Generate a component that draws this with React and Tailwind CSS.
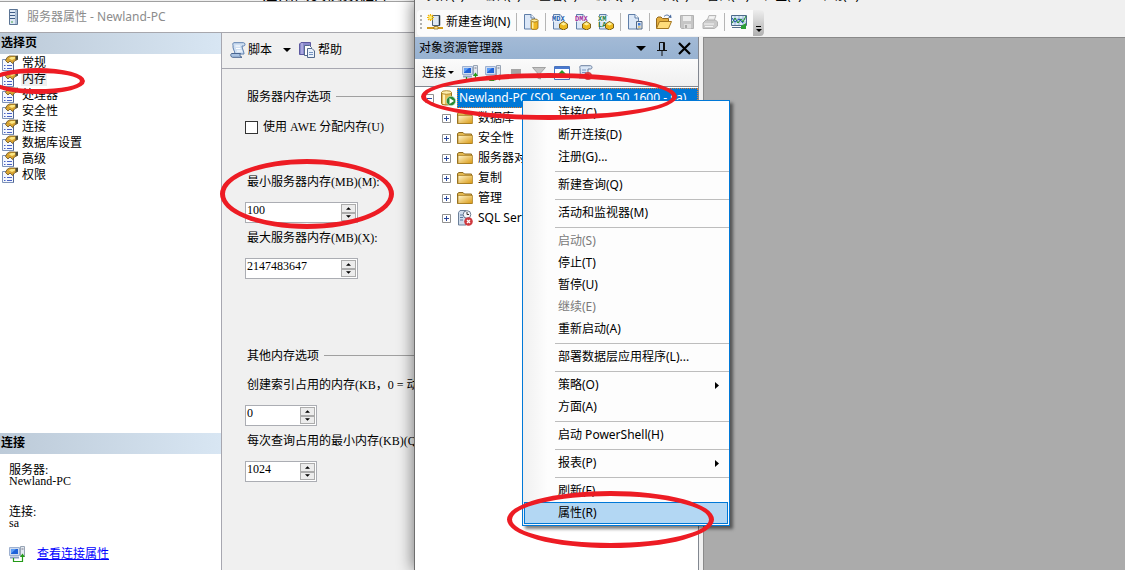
const pages = ['常规', '内存', '处理器', '安全性', '连接', '数据库设置', '高级', '权限'];

const menuBar = ['文件(F)', '编辑(E)', '查看(V)', '调试(D)', '工具(T)', '窗口(W)', '社区(C)', '帮助(H)'];

const folders = ['数据库', '安全性', '服务器对象', '复制', '管理'];

const contextMenu = [
  [{ label: '连接(C)...' }, { label: '断开连接(D)' }, { label: '注册(G)...' }],
  [{ label: '新建查询(Q)' }],
  [{ label: '活动和监视器(M)' }],
  [
    { label: '启动(S)', disabled: true },
    { label: '停止(T)' },
    { label: '暂停(U)' },
    { label: '继续(E)', disabled: true },
    { label: '重新启动(A)' },
  ],
  [{ label: '部署数据层应用程序(L)...' }],
  [{ label: '策略(O)', submenu: true }, { label: '方面(A)' }],
  [{ label: '启动 PowerShell(H)' }],
  [{ label: '报表(P)', submenu: true }],
  [{ label: '刷新(F)' }, { label: '属性(R)', active: true }],
];

function Icon({ children, className = '' }) {
  return (
    <svg viewBox="0 0 16 16" className={`size-4 shrink-0 ${className}`} aria-hidden="true">
      {children}
    </svg>
  );
}

function ServerIcon() {
  return (
    <Icon>
      <path d="M4.5.5h8v15h-8z" fill="#dfe9f5" stroke="#5b7494" />
      <path d="M11 1v14" stroke="#a9bdd4" strokeWidth="2" />
      <path d="M5 3.500h5M5 6.500h5M5 9.500h5" stroke="#3d5c86" />
      <path d="M6 13h2" stroke="#46a546" />
    </Icon>
  );
}

function PageIcon() {
  return (
    <Icon>
      <path d="M.5 4.500h11v11H.5z" fill="#f4f7fd" stroke="#7d92b8" />
      <path d="M11.500 5v10.500" stroke="#4f6490" />
      <path d="M2 10.500h1.500M2 13.500h1.500M5 10.500h5M5 13.500h5" stroke="#4a62c4" />
      <path d="m3.500 5.500 1.500-3L7.500 1h5l3 .5v3L12.500 6l-2 2.500L8 6 6 8z" fill="#d9a431" stroke="#6a5220" strokeWidth=".8" />
      <path d="m7 3.500 2-1.500h4v1.500L10 5z" fill="#fbe683" />
      <path d="m13.500 1 2.500-.5v4L13.500 5z" fill="#4a4a3a" />
    </Icon>
  );
}

function ScriptIcon() {
  return (
    <Icon>
      <path d="M4 .7h9.500c2 .2 2 3.300 0 3.300H12c0 3 2 5 2 8H5C5 9 2.500 7 3 3.500 2.500 2 3 .7 4 .7z" fill="#cfdff2" stroke="#5d7fae" />
      <path d="M1.500 11.500h9c-1 1-.5 3.500 1.500 3.800H2.500c-2-.3-2.200-3-1-3.800z" fill="#a9c2e2" stroke="#49658f" />
      <path d="M5.500 4h4.500M6 6.500h4.500M7 9h5" stroke="#fff" />
    </Icon>
  );
}

function HelpIcon() {
  return (
    <Icon>
      <path d="M.5 2 2 .5h9.500v12H.5z" fill="#8a88cc" stroke="#5c59a0" />
      <path d="M3 1v11" stroke="#c9c8ef" />
      <path d="M5.500 3.500h5l2 2v8h-7z" fill="#fff" stroke="#53698c" />
      <path d="M8.500 6.500h4.500l2.500 2.500v6.500h-7z" fill="#eaf2fb" stroke="#53698c" />
      <path d="M10 10.500h4M10 12.500h4" stroke="#7694c0" />
    </Icon>
  );
}

function Computers() {
  return (
    <>
      <path d="M.5 1.500h10v8H.5z" fill="#cfdcf0" stroke="#9db0d0" />
      <path d="M2 3h7v5H2z" fill="#1f62d8" />
      <path d="M2 3h5L2 7.500z" fill="#5b9cf5" />
      <path d="M1 11.500h9" stroke="#8da2c4" strokeWidth="2" />
      <path d="M11.500.5h4v10h-4z" fill="#e2e8f0" stroke="#98a4b4" />
      <path d="M12.500 3h2" stroke="#778" />
    </>
  );
}

function ConnectIcon() {
  return (
    <Icon>
      <Computers />
      <path d="M4.500 12v3.500h9V9" fill="none" stroke="#249a18" strokeWidth="1.200" />
      <path d="m11 11 2.500-3.500L16 11z" fill="#249a18" />
    </Icon>
  );
}

function DisconnectIcon() {
  return (
    <Icon>
      <Computers />
      <path d="M4.500 13v2.500h5" fill="none" stroke="#249a18" />
      <path d="m10 10 5 5m0-5-5 5" stroke="#d8262c" strokeWidth="1.500" />
    </Icon>
  );
}

function Sheet() {
  return (
    <>
      <path d="M1.500.5H8L11.500 4v11h-10z" fill="#dbe7f7" stroke="#5f7ea8" />
      <path d="M8 .5V4h3.500" fill="#fff" stroke="#5f7ea8" />
    </>
  );
}

function Cylinder() {
  return (
    <>
      <path d="M8 6.500v7.500c0 2 7 2 7 0V6.500z" fill="#f0b823" stroke="#94690c" strokeWidth=".8" />
      <path d="M9 8v6.500h1.500V8z" fill="#fff0a0" />
      <ellipse cx="11.500" cy="6.500" rx="3.500" ry="1.500" fill="#fff0a0" stroke="#94690c" strokeWidth=".8" />
    </>
  );
}

function NewQueryIcon() {
  return (
    <Icon>
      <path d="M5.500 1.500h7v10h-7z" fill="#dfe9f4" stroke="#4f6175" />
      <path d="M12.500 1.500v10" stroke="#283848" strokeWidth="1.500" />
      <path d="M0 14h16M8.500 12v2" stroke="#d39a19" strokeWidth="2" />
      <path d="M7 12.500h4V15H7z" fill="#ffe58a" stroke="#8a6518" strokeWidth=".7" />
      <path d="M3.500 0v7M0 3.500h7M1 1l5 5M6 1 1 6" stroke="#f3b300" strokeWidth="1.200" />
      <circle cx="3.500" cy="3.500" r="1.700" fill="#fff06a" />
    </Icon>
  );
}

function EngineQueryIcon() {
  return <Icon><Sheet /><Cylinder /></Icon>;
}

function CubeQueryIcon({ first, second, color }) {
  return (
    <Icon>
      <Sheet />
      <path d="M0 2h12v5.500H0z" fill="#f3f6fb" />
      <text x="0" y="7" fontSize="7" fontWeight="700" fill={color} fontFamily="Liberation Mono, monospace">{first}</text>
      {second && <text x="0" y="13" fontSize="7" fontWeight="700" fill={color} fontFamily="Liberation Mono, monospace">{second}</text>}
      <path d="M7.500 10 11.500 7.500 15.500 10v4l-4 2-4-2z" fill="#edb91e" stroke="#73560d" strokeWidth=".9" />
      <path d="m8.500 10 3-1.700L14.500 10l-3 1.500z" fill="#fff19b" />
    </Icon>
  );
}

function CompactQueryIcon() {
  return (
    <Icon>
      <Sheet />
      <path d="M9.500 7.500h5.500v7.500H9.500z" fill="#dfe6f0" stroke="#526885" />
      <path d="M11 9h2.500v2.500H11z" fill="#3b79d2" />
      <path d="M11 13h2.500" stroke="#d3a11f" />
    </Icon>
  );
}

function OpenIcon() {
  return (
    <Icon>
      <path d="M.5 14V4.500L2 3h3l1.500 1.500h6V14z" fill="#e4ae3e" stroke="#94681d" />
      <path d="m.5 14.500 3-7h12l-3 7z" fill="#ffdc7b" stroke="#a4761f" />
      <path d="M8 2.500C10 .5 12.500.5 14 3" fill="none" stroke="#496a9e" />
      <path d="m12 3.500 3.500.5-.5-3.500z" fill="#496a9e" />
    </Icon>
  );
}

function SaveIcon() {
  return (
    <Icon>
      <path d="M1.500 1.500h13v13h-12l-1-1z" fill="#c6c6c6" stroke="#b2b2b2" />
      <path d="M4 2h8v5H4z" fill="#ededed" />
      <path d="M5 10h7v4.500H5z" fill="#dedede" />
      <path d="M6 11h2v3H6z" fill="#a8a8a8" />
    </Icon>
  );
}

function PrintIcon() {
  return (
    <Icon>
      <path d="M5 7 7 1.500h7L12 7z" fill="#ececec" stroke="#b8b8b8" />
      <path d="m1 9 3-3h9.500L15.500 8v4l-3 2.500H1z" fill="#cacaca" stroke="#b2b2b2" />
      <path d="M2 10h10M3 12.500h8M7.500 3.500h4" stroke="#f5f5f5" />
    </Icon>
  );
}

function ActivityIcon() {
  return (
    <Icon>
      <path d="M.5 1.500h15v10H.5z" fill="#dcecf8" stroke="#4d6a8a" />
      <path d="M4 2v9M8 2v9M12 2v9M1 5h14M1 8h14" stroke="#6f93b5" strokeWidth=".6" />
      <path d="m1 9 3-5 3 5 3-4 2 3 3-6" fill="none" stroke="#1d8d2a" />
      <path d="m1 4 3 4 4-3 4 4" fill="none" stroke="#2452b8" />
      <path d="M1 13.500h10" stroke="#536d8a" />
      <path d="m10 12 5-3v6h-5z" fill="#2c9e35" />
    </Icon>
  );
}

function StopIcon() {
  return <Icon><path d="M3 4h10v9H3z" fill="#a5a5a5" /></Icon>;
}

function FilterIcon() {
  return (
    <Icon>
      <path d="M1.500 2.500h13L9.500 8v6l-3-1V8z" fill="#c3c3c3" stroke="#a2a2a2" />
    </Icon>
  );
}

function RefreshIcon() {
  return (
    <Icon>
      <path d="M.5 1.500h15v13H.5z" fill="#fff" stroke="#4a74bd" />
      <path d="M1 3h14" stroke="#4a79d0" strokeWidth="2" />
      <path d="m8 5 4 4H9.500v3.500h-3V9H4z" fill="#2a9a2a" />
    </Icon>
  );
}

function ScriptErrorIcon() {
  return (
    <Icon>
      <path d="M4 .7h9.500c2 .2 2 3.300 0 3.300H11v9H2c2-2 1-6 1-9.500C2.500 2 3 .7 4 .7z" fill="#dbe7f6" stroke="#6a7f9f" />
      <path d="M5 5h4M5 7.500h4" stroke="#7795c3" />
      <circle cx="11" cy="11" r="4" fill="#d04a4a" />
      <path d="m9.500 9.500 3 3m0-3-3 3" stroke="#fff" />
    </Icon>
  );
}

function DatabaseServerIcon() {
  return (
    <Icon>
      <path d="M1.500 2.500v11c0 2 10 2 10 0v-11z" fill="#e6bd55" stroke="#98711e" />
      <path d="M3 4v10h2V4z" fill="#fff1b8" />
      <ellipse cx="6.500" cy="2.500" rx="5" ry="1.800" fill="#fff0af" stroke="#b48b2c" />
      <circle cx="11" cy="11" r="4.700" fill="#278a35" stroke="#d9eedb" strokeWidth=".6" />
      <path d="M9.500 8v6l4.500-3z" fill="#fff" />
    </Icon>
  );
}

function FolderIcon() {
  return (
    <Icon>
      <defs>
        <linearGradient id="folder" x1="0" y1="0" x2="1" y2="1">
          <stop offset="0" stopColor="#fff6cf" />
          <stop offset="1" stopColor="#d9980f" />
        </linearGradient>
      </defs>
      <path d="M.5 13.500v-10L2 2.500h4l1.500 1.500h7v9.500z" fill="#e2b74f" stroke="#8f6a1e" />
      <path d="M1 5.500h14.500v8H1z" fill="url(#folder)" stroke="#a67c22" strokeWidth=".7" />
    </Icon>
  );
}

function AgentIcon() {
  return (
    <Icon>
      <path d="M1.500 2.500 3 .5h6v14.500H1.500z" fill="#cfdcec" stroke="#6b7f99" />
      <path d="M3 5h3M3 7.500h3M3 10h3" stroke="#5a789e" />
      <circle cx="10" cy="4.500" r="3.800" fill="#f4f6fa" stroke="#6b7a90" />
      <path d="M10 2v2.500h2" fill="none" stroke="#333" />
      <circle cx="11.500" cy="11.500" r="4.300" fill="#cf3a3f" />
      <path d="m10 10 3 3m0-3-3 3" stroke="#fff" strokeWidth="1.300" />
    </Icon>
  );
}

function Expander({ open }) {
  return (
    <svg viewBox="0 0 9 9" className="size-[9px] shrink-0" aria-hidden="true">
      <path d="M.5.5h8v8h-8z" fill="#fff" stroke="#919191" />
      <path d={open ? 'M2 4.500h5' : 'M2 4.500h5M4.500 2v5'} stroke="#2b4a9b" />
    </svg>
  );
}

function DownArrow({ className }) {
  return (
    <svg viewBox="0 0 8 4" className={className} aria-hidden="true">
      <path d="M0 0h8L4 4z" fill="currentColor" />
    </svg>
  );
}

function ToolButton({ label, children }) {
  return <button type="button" aria-label={label} className="shrink-0">{children}</button>;
}

function ToolSeparator() {
  return <span className="mx-1.5 h-[18px] w-px shrink-0 bg-[#b5b5b5]" />;
}

function NumberField({ id, label, value, small }) {
  return (
    <div className="flex flex-col items-start gap-[13px]">
      <label htmlFor={id} className="h-4 pl-0.5 leading-[18px] whitespace-nowrap">{label}</label>
      <div className={`flex h-[21px] border border-[#abadb3] bg-white p-px ${small ? 'w-[72px]' : 'w-[113px]'}`}>
        <input id={id} defaultValue={value} className="h-3 min-w-0 flex-1 leading-3 outline-none" />
        <span className="flex w-[15px] flex-col bg-[#f0f0f0]">
          <button type="button" aria-label="增加" className="flex flex-1 items-center justify-center border border-[#acacac] bg-[#ececec]">
            <DownArrow className="h-[3px] w-[5px] rotate-180" />
          </button>
          <button type="button" aria-label="减少" className="flex flex-1 items-center justify-center border border-[#acacac] bg-[#ececec]">
            <DownArrow className="h-[3px] w-[5px]" />
          </button>
        </span>
      </div>
    </div>
  );
}

function GroupTitle({ children }) {
  return (
    <h3 className="flex h-4 items-center gap-[5px] pl-0.5 leading-[18px]">
      <span className="h-4 shrink-0">{children}</span>
      <span className="h-px flex-1 bg-[#a0a0a0]" />
    </h3>
  );
}

function SectionHeader({ children }) {
  return (
    <h2 className="h-[21px] bg-linear-to-r from-[#bccad8] to-[#d8e6f3] pl-px text-xs leading-5 font-bold">{children}</h2>
  );
}

function PropertiesDialog() {
  return (
    <section className="flex w-[414px] shrink-0 flex-col overflow-hidden bg-[#f0f0f0] font-['Liberation_Serif','Noto_Sans_CJK_SC',serif] text-xs">
      <div className="flex h-0.5 items-end gap-8 overflow-hidden border-b border-[#a0a0a0] bg-[#f0f0f0] pl-[225px] text-base leading-3 whitespace-nowrap">
        <span>•</span>
        <span>启用的实例数据库</span>
      </div>
      <header className="flex h-[31px] items-center gap-1.5 border-b border-[#a7a7ad] bg-white pl-[5px] font-['Noto_Sans','Noto_Sans_CJK_SC',sans-serif] text-[#8c8c8c]">
        <ServerIcon />
        <h1>服务器属性 - Newland-PC</h1>
      </header>
      <div className="flex flex-1">
        <aside className="flex w-[222px] shrink-0 flex-col border-r border-[#a7a7b0] bg-white">
          <SectionHeader>选择页</SectionHeader>
          <ul className="flex-1 pt-px">
            {pages.map((page) => (
              <li key={page} className="flex h-4 items-center gap-[3px] pl-0.5">
                <PageIcon />
                <span className={page === '内存' ? 'bg-[#f0f0f0] px-px leading-[14px]' : 'px-px leading-[14px]'}>{page}</span>
              </li>
            ))}
          </ul>
          <SectionHeader>连接</SectionHeader>
          <dl className="pt-[9px] pl-[9px] leading-3">
            <dt className="h-3 leading-[14px]">服务器:</dt>
            <dd className="mb-[18px]">Newland-PC</dd>
            <dt className="h-3 leading-[14px]">连接:</dt>
            <dd>sa</dd>
          </dl>
          <div className="mt-[17px] mb-2 flex h-4 items-center gap-3 pl-[9px]">
            <ConnectIcon />
            <a href="#connection" className="text-[#0000ff] underline">查看连接属性</a>
          </div>
        </aside>
        <div className="min-w-0 flex-1">
          <div className="flex h-9 items-center border-b border-[#a7a7b0] pb-0.5 pl-2 whitespace-nowrap">
            <button type="button" className="flex items-center gap-0.5"><ScriptIcon />脚本</button>
            <button type="button" aria-label="脚本选项" className="ml-[11px]"><DownArrow className="h-1 w-2" /></button>
            <button type="button" className="ml-2 flex items-center gap-[3px]"><HelpIcon />帮助</button>
          </div>
          <form className="pt-[19px] pl-[23px]">
            <GroupTitle>服务器内存选项</GroupTitle>
            <label className="mt-[15px] mb-[38px] flex h-4 items-center gap-[5px]">
              <input type="checkbox" className="size-[13px] appearance-none border border-[#333] bg-white" />
              使用 AWE 分配内存(U)
            </label>
            <div className="flex flex-col gap-1.5">
              <NumberField id="min-memory" label="最小服务器内存(MB)(M):" value="100" />
              <NumberField id="max-memory" label="最大服务器内存(MB)(X):" value="2147483647" />
            </div>
            <div className="mt-[68px] mb-[13px]">
              <GroupTitle>其他内存选项</GroupTitle>
            </div>
            <div className="flex flex-col gap-1.5">
              <NumberField id="index-memory" label="创建索引占用的内存(KB，0 = 动态内存)(I):" value="0" small />
              <NumberField id="query-memory" label="每次查询占用的最小内存(KB)(Q):" value="1024" small />
            </div>
          </form>
        </div>
      </div>
    </section>
  );
}

function StudioToolbar() {
  return (
    <div className="flex h-[26px] shrink-0 pl-0.5">
      <div className="flex items-center rounded-l-sm bg-[#fbfbfb] pr-1.5 pb-0.5 pl-[3px]">
        <span className="mr-1 h-3.5 w-[3px] border-l-2 border-dotted border-[#b0b0b0]" />
        <button type="button" className="flex shrink-0 items-center gap-[3px] whitespace-nowrap"><NewQueryIcon />新建查询(N)</button>
        <ToolSeparator />
        <ToolButton label="数据库引擎查询"><EngineQueryIcon /></ToolButton>
        <ToolSeparator />
        <div className="flex gap-[7px]">
          <ToolButton label="MDX 查询"><CubeQueryIcon first="MDX" color="#1f5fae" /></ToolButton>
          <ToolButton label="DMX 查询"><CubeQueryIcon first="DMX" color="#a4309c" /></ToolButton>
          <ToolButton label="XMLA 查询"><CubeQueryIcon first="XM" second="LA" color="#258048" /></ToolButton>
        </div>
        <ToolSeparator />
        <ToolButton label="Compact 查询"><CompactQueryIcon /></ToolButton>
        <ToolSeparator />
        <div className="flex gap-[7px]">
          <ToolButton label="打开"><OpenIcon /></ToolButton>
          <ToolButton label="保存"><SaveIcon /></ToolButton>
          <ToolButton label="打印"><PrintIcon /></ToolButton>
        </div>
        <ToolSeparator />
        <ToolButton label="活动监视器"><ActivityIcon /></ToolButton>
      </div>
      <button type="button" aria-label="工具栏选项" className="flex w-[11px] flex-col items-center justify-end gap-0.5 rounded-r-sm bg-linear-to-b from-[#eeeeee] to-[#b0b0b0] pb-1">
        <span className="h-px w-[5px] bg-black" />
        <DownArrow className="h-[3px] w-1.5" />
      </button>
    </div>
  );
}

function ObjectExplorer() {
  return (
    <section className="flex w-[284px] shrink-0 flex-col overflow-hidden border-r border-[#828790] bg-white whitespace-nowrap">
      <header className="flex h-[22px] shrink-0 items-center bg-linear-to-b from-[#a3bad6] to-[#97b2d1] pr-[7px] pl-1">
        <h2 className="flex-1">对象资源管理器</h2>
        <button type="button" aria-label="窗口位置" className="mr-2.5"><DownArrow className="h-[5px] w-2.5" /></button>
        <button type="button" aria-label="自动隐藏" className="mr-2.5">
          <svg viewBox="0 0 12 15" className="h-[15px] w-3" aria-hidden="true">
            <path d="M3.500 9V1.500h5V9M1 9.500h10M6 10v5M7.500 2v7" fill="none" stroke="#111" />
          </svg>
        </button>
        <button type="button" aria-label="关闭">
          <svg viewBox="0 0 13 13" className="size-[13px]" aria-hidden="true">
            <path d="m1 1 11 11m0-11L1 12" stroke="#000" strokeWidth="2.200" />
          </svg>
        </button>
      </header>
      <div className="flex h-7 shrink-0 items-center gap-[7px] border-b border-[#828790] bg-linear-to-b from-[#fbfbfb] to-[#f0f0f0] pl-[7px]">
        <button type="button" className="mr-px flex items-center gap-0.5">连接<DownArrow className="h-[3px] w-1.5" /></button>
        <ToolButton label="连接服务器"><ConnectIcon /></ToolButton>
        <ToolButton label="断开连接"><DisconnectIcon /></ToolButton>
        <ToolButton label="停止"><StopIcon /></ToolButton>
        <ToolButton label="筛选"><FilterIcon /></ToolButton>
        <ToolButton label="刷新"><RefreshIcon /></ToolButton>
        <ToolButton label="脚本错误"><ScriptErrorIcon /></ToolButton>
      </div>
      <ul className="pt-px">
        <li>
          <div className="flex h-5 items-center pl-2.5">
            <Expander open />
            <span className="mr-px ml-1.5 flex"><DatabaseServerIcon /></span>
            <span className="h-5 flex-1 overflow-hidden border border-dotted border-[#e08030] bg-[#0078d7] pl-px leading-[18px] text-white">
              Newland-PC (SQL Server 10.50.1600 - sa)
            </span>
          </div>
          <ul>
            {folders.map((folder) => (
              <li key={folder} className="flex h-5 items-center pl-[27px]">
                <Expander />
                <span className="mr-[5px] ml-1.5 flex"><FolderIcon /></span>
                {folder}
              </li>
            ))}
            <li className="flex h-5 items-center pl-[27px]">
              <Expander />
              <span className="mr-[5px] ml-1.5 flex"><AgentIcon /></span>
              SQL Server 代理
            </li>
          </ul>
        </li>
      </ul>
    </section>
  );
}

function ContextMenu() {
  return (
    <div role="menu" className="absolute top-[100px] left-[107px] w-[208px] border border-[#0078d7] bg-[#fdfdfd] bg-linear-to-r from-[#f0f0f0] from-0% to-[#fdfdfd] to-12% pt-px pb-px shadow-[3px_3px_3px_rgba(0,0,0,0.5)]">
      {contextMenu.map((group, index) => (
        <div key={group[0].label}>
          {index > 0 && <div className="ml-8 h-1.5"><div className="h-1 border-b border-[#bdbdbd]" /></div>}
          {group.map((item) => (
            <button
              key={item.label}
              type="button"
              role="menuitem"
              disabled={item.disabled}
              className={
                item.active
                  ? 'mx-px flex h-[22px] w-[204px] items-center border border-[#0078d7] bg-[#b3d7f3] pl-[33px] text-left'
                  : 'flex h-[22px] w-full items-center pr-2.5 pl-[35px] text-left disabled:text-[#7a7a7a]'
              }
            >
              <span className="flex-1">{item.label}</span>
              {item.submenu && (
                <svg viewBox="0 0 4 7" className="h-[7px] w-1" aria-hidden="true"><path d="M0 0v7l4-3.500z" /></svg>
              )}
            </button>
          ))}
        </div>
      ))}
    </div>
  );
}

function StudioWindow() {
  return (
    <section className="relative flex min-w-0 flex-1 flex-col border-l border-[#6e6e6e] bg-[#f0f0f0] font-['Noto_Sans','Noto_Sans_CJK_SC',sans-serif] text-xs text-black shadow-[-2px_0_14px_rgba(0,0,0,0.45)]">
      <nav className="flex h-2.5 shrink-0 overflow-hidden pl-3">
        {menuBar.map((item) => (
          <button key={item} type="button" className="-mt-3 h-4 w-14 shrink-0 text-left leading-4 whitespace-nowrap">{item}</button>
        ))}
      </nav>
      <StudioToolbar />
      <div className="flex flex-1 pt-px">
        <ObjectExplorer />
        <div className="ml-1 flex-1 border-t border-l border-[#8a8a8a] bg-[#ababab]" />
      </div>
      <ContextMenu />
    </section>
  );
}

export default function App() {
  return (
    <main className="relative flex min-h-screen overflow-hidden">
      <PropertiesDialog />
      <StudioWindow />
      {/* hand-drawn highlights */}
      <div className="pointer-events-none absolute top-[68px] -left-[10px] h-[26px] w-[95px] rounded-[50%] border-[5px] border-[#ed1c24]" />
      <div className="pointer-events-none absolute top-[159px] left-[220px] h-[70px] w-[174px] rounded-[50%] border-[5px] border-[#ed1c24]" />
      <div className="pointer-events-none absolute top-[73px] left-[421px] h-[47px] w-[256px] rounded-[50%] border-[5px] border-[#ed1c24]" />
      <div className="pointer-events-none absolute top-[491px] left-[507px] h-[57px] w-[207px] rounded-[50%] border-[5px] border-[#ed1c24]" />
    </main>
  );
}
